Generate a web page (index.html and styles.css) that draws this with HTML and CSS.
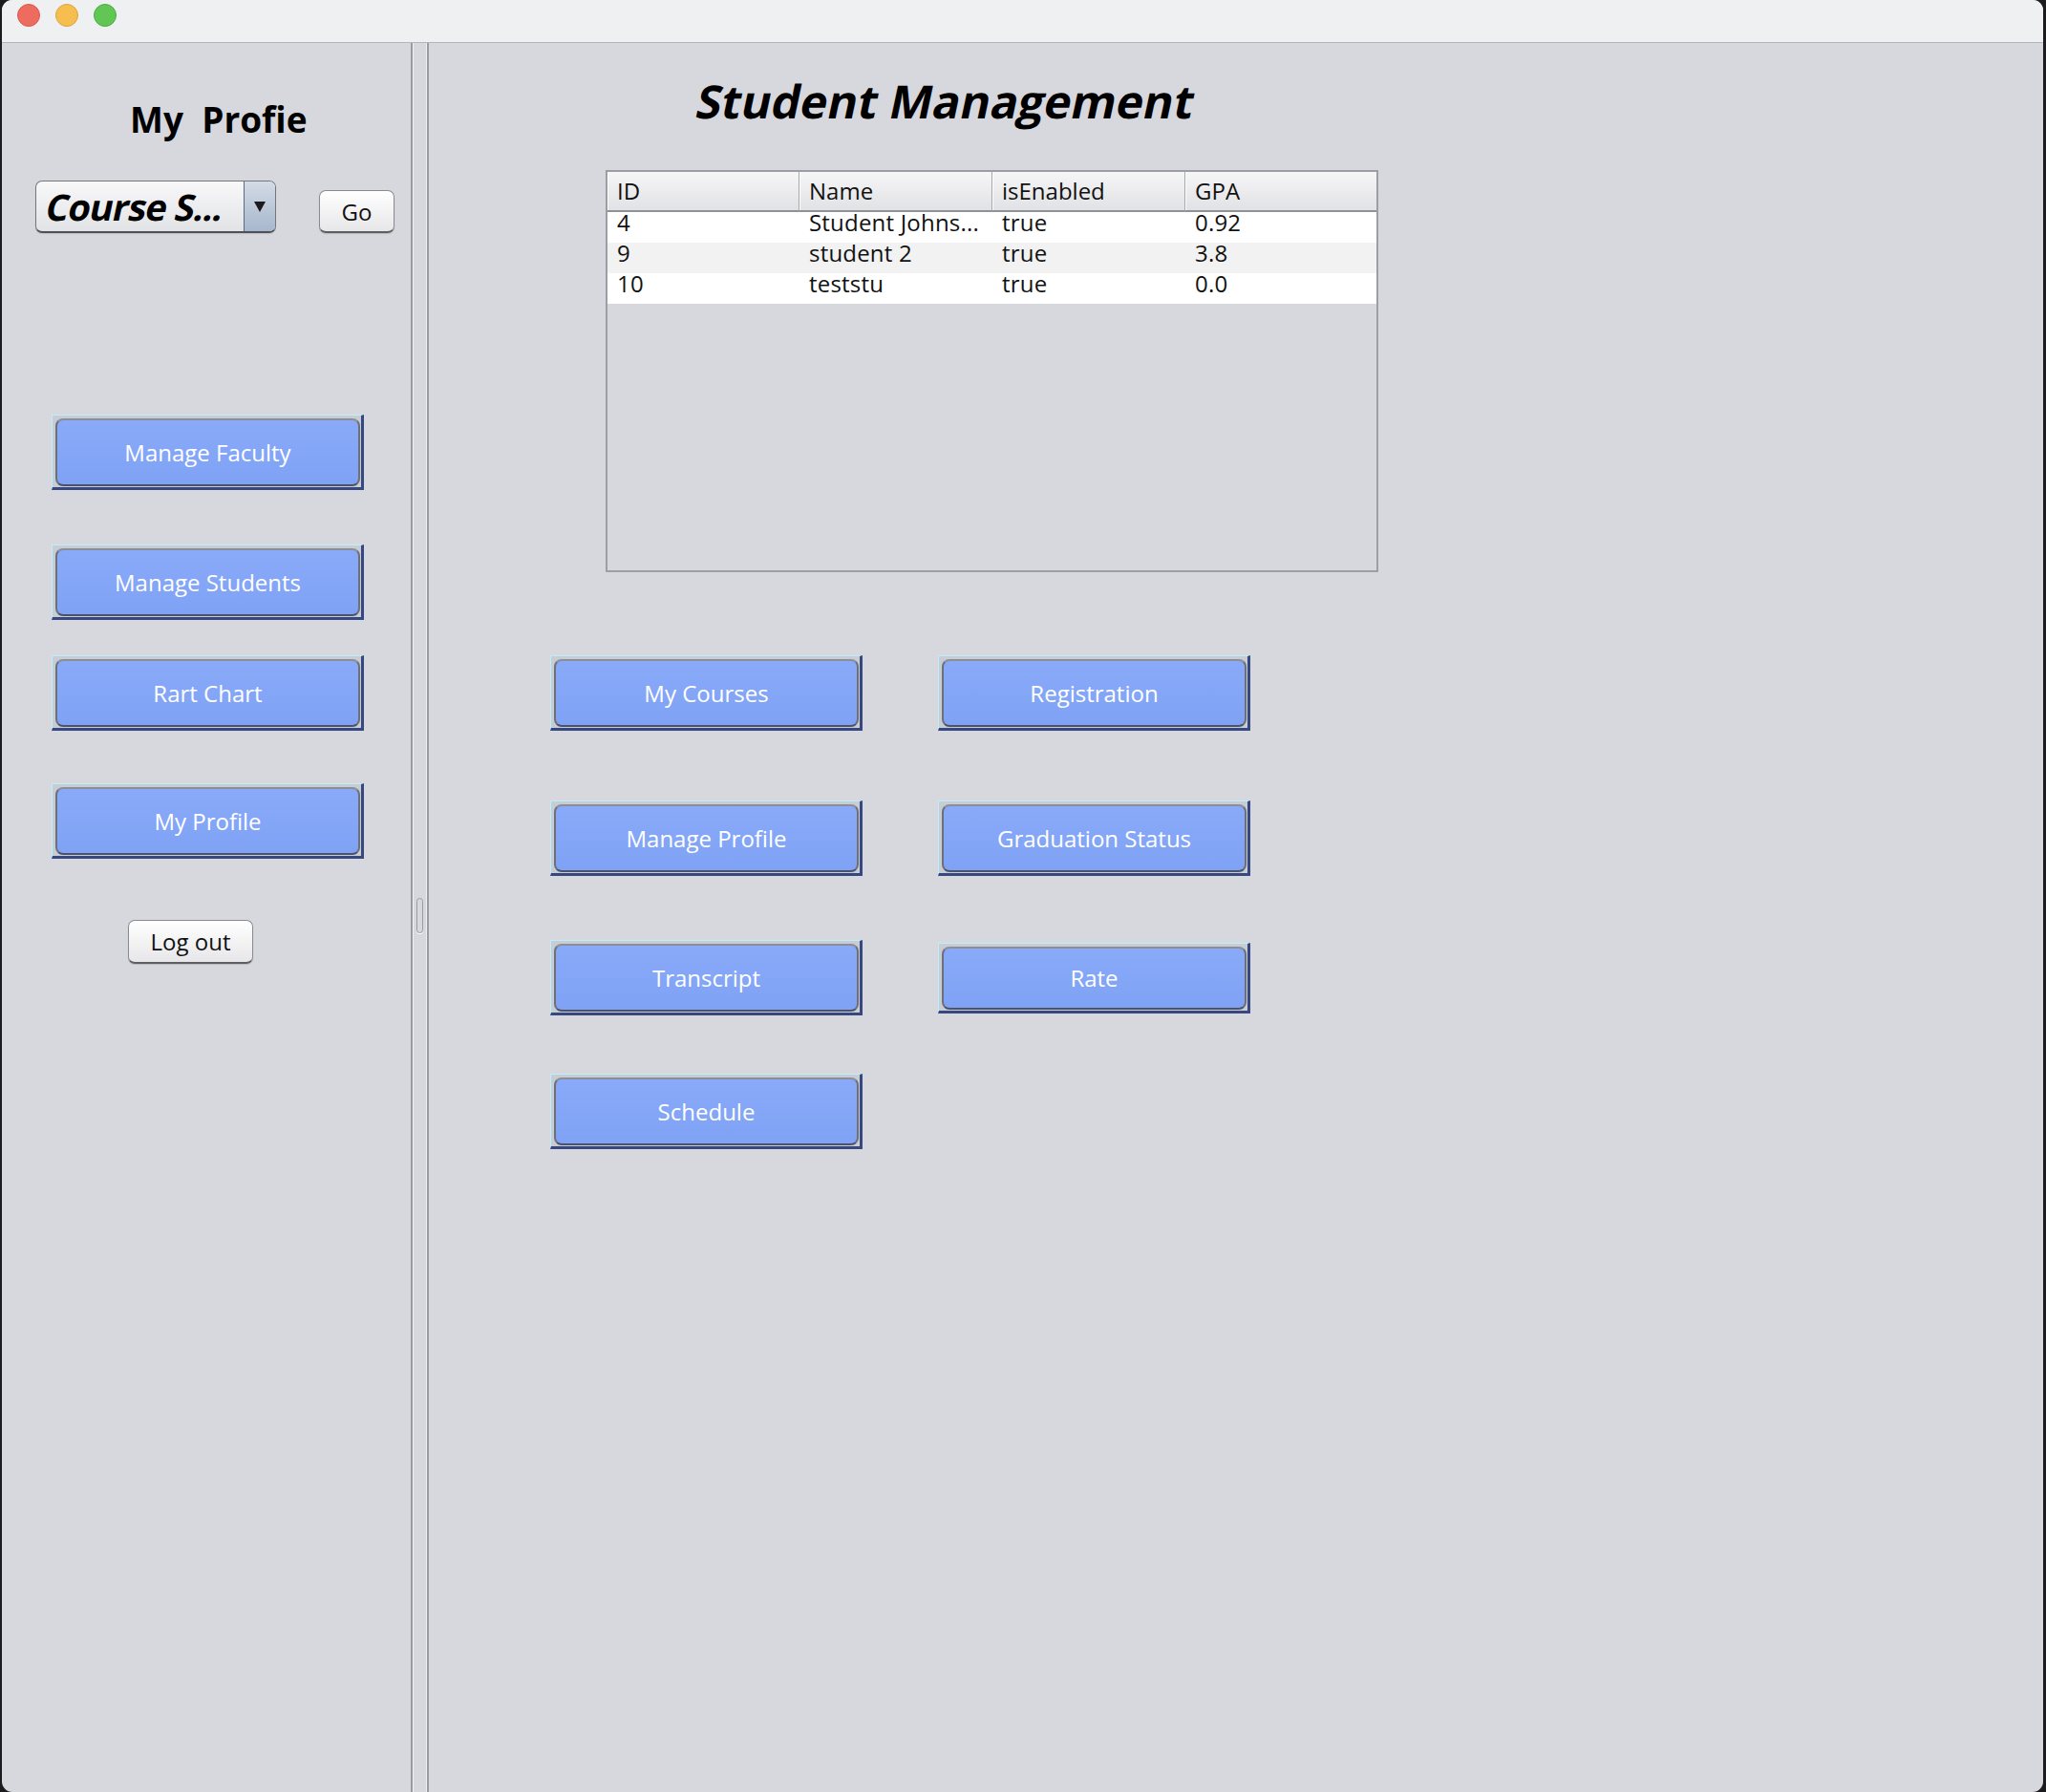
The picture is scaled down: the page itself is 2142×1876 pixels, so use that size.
FILE: index.html
```html
<!DOCTYPE html>
<html lang="en">
<head>
<meta charset="utf-8">
<title>Student Management</title>
<link rel="stylesheet" href="styles.css">
</head>
<body>
<div class="window">
  <header class="titlebar">
    <span class="light light-close"></span>
    <span class="light light-min"></span>
    <span class="light light-max"></span>
  </header>
  <div class="content">
    <aside class="side">
      <h2 class="side-title">My  Profie</h2>
      <div class="picker-row">
        <div class="combo">
          <span class="combo-text"><span class="oblique">Course S...</span></span>
          <span class="combo-arrow"><span class="tri"></span></span>
        </div>
        <button class="aqua go">Go</button>
      </div>
      <nav class="side-nav">
        <button class="tile"><span class="tile-face">Manage Faculty</span></button>
        <button class="tile nav-2"><span class="tile-face">Manage Students</span></button>
        <button class="tile nav-3"><span class="tile-face">Rart Chart</span></button>
        <button class="tile nav-4"><span class="tile-face">My Profile</span></button>
      </nav>
      <button class="aqua logout">Log out</button>
    </aside>
    <div class="divider"><span class="grip"></span></div>
    <main class="main">
      <h1 class="page-title"><span class="oblique">Student Management</span></h1>
      <div class="table-pane">
        <table class="grid">
          <colgroup>
            <col class="c1"><col class="c2"><col class="c3"><col class="c4">
          </colgroup>
          <thead>
            <tr><th>ID</th><th>Name</th><th>isEnabled</th><th class="last">GPA</th></tr>
          </thead>
          <tbody>
            <tr><td>4</td><td>Student Johns...</td><td>true</td><td>0.92</td></tr>
            <tr class="alt"><td>9</td><td>student 2</td><td>true</td><td>3.8</td></tr>
            <tr><td>10</td><td>teststu</td><td>true</td><td>0.0</td></tr>
          </tbody>
        </table>
      </div>
      <div class="actions">
        <div class="action-row">
          <button class="tile"><span class="tile-face">My Courses</span></button>
          <button class="tile"><span class="tile-face">Registration</span></button>
        </div>
        <div class="action-row row-2">
          <button class="tile"><span class="tile-face">Manage Profile</span></button>
          <button class="tile"><span class="tile-face">Graduation Status</span></button>
        </div>
        <div class="action-row row-3">
          <button class="tile"><span class="tile-face">Transcript</span></button>
          <button class="tile tile-short"><span class="tile-face">Rate</span></button>
        </div>
        <div class="action-row row-4">
          <button class="tile"><span class="tile-face">Schedule</span></button>
        </div>
      </div>
    </main>
  </div>
</div>
</body>
</html>
```
FILE: styles.css
```css
* { box-sizing: border-box; }

html, body {
  margin: 0;
  padding: 0;
}

body {
  width: 2142px;
  height: 1876px;
  overflow: hidden;
  background: #1c1c1e;
  font-family: "Open Sans", "DejaVu Sans", sans-serif;
  color: #111;
}

.window {
  margin-left: 2px;
  width: 2137px;
  height: 1876px;
  border-radius: 11px;
  overflow: hidden;
  background: #d7d8dd;
  display: flex;
  flex-direction: column;
}

/* title bar */
.titlebar {
  flex: none;
  height: 45px;
  background: #eff0f2;
  border-bottom: 1px solid #b4b5b9;
  display: flex;
  align-items: flex-start;
  gap: 16px;
  padding: 4px 0 0 16px;
}

.light {
  width: 24px;
  height: 24px;
  border-radius: 50%;
  border: 1px solid transparent;
}
.light-close { background: #ee6b60; border-color: #d75a4f; }
.light-min { background: #f6be4f; border-color: #dba33f; }
.light-max { background: #62c655; border-color: #50aa43; }

.content {
  flex: 1;
  min-height: 0;
  display: flex;
}

/* left panel */
.side {
  flex: none;
  width: 428px;
  display: flex;
  flex-direction: column;
  align-items: flex-start;
  padding-top: 55px;
}

.side-title {
  margin: 0 0 0 134px;
  font-size: 37px;
  line-height: 50px;
  font-weight: 700;
  white-space: pre;
  color: #000;
}

.picker-row {
  display: flex;
  align-items: flex-end;
  margin: 39px 0 0 35px;
}

.combo {
  width: 252px;
  height: 55px;
  display: flex;
  border: 1px solid #74767c;
  border-bottom: 2px solid #4f5158;
  border-radius: 7px;
  overflow: hidden;
  background: linear-gradient(#f8f8f9, #e2e3e6);
  box-shadow: 0 1px 1px rgba(0, 0, 0, 0.12);
}

.combo-text {
  flex: 1;
  display: flex;
  align-items: center;
  padding-left: 11px;
  font-size: 38px;
  letter-spacing: -0.9px;
  font-weight: 700;
  color: #000;
  white-space: nowrap;
  overflow: hidden;
}

.oblique {
  display: inline-block;
  transform: skewX(-12deg);
}

.combo-arrow {
  width: 33px;
  flex: none;
  border-left: 1px solid #5d6b82;
  background: linear-gradient(#d3dbe6, #a7b7cd);
  display: flex;
  align-items: center;
  justify-content: center;
}

.tri {
  width: 0;
  height: 0;
  border-left: 6px solid transparent;
  border-right: 6px solid transparent;
  border-top: 11px solid #1b1b1b;
}

.aqua {
  font-family: inherit;
  font-size: 24px;
  color: #111;
  padding: 0;
  background: linear-gradient(#ffffff, #e7e7e9);
  border: 1px solid #8b8b8f;
  border-bottom: 2px solid #5f5f63;
  border-radius: 7px;
  box-shadow: 0 1px 1px rgba(0, 0, 0, 0.15);
}

.go {
  width: 79px;
  height: 45px;
  margin-left: 45px;
}

.logout {
  width: 131px;
  height: 46px;
  margin: 64px 0 0 132px;
}

.side-nav {
  display: flex;
  flex-direction: column;
  margin: 190px 0 0 52px;
}
.nav-2 { margin-top: 57px; }
.nav-3 { margin-top: 37px; }
.nav-4 { margin-top: 55px; }

/* blue tile buttons */
.tile {
  width: 327px;
  height: 79px;
  display: flex;
  padding: 3px 1px 1px 3px;
  border-style: solid;
  border-width: 1px 3px 3px 1px;
  border-color: #bdeef9 #37477f #37477f #bdeef9;
  background: #c8ccd4;
  font-family: inherit;
  cursor: pointer;
}

.tile-short { height: 74px; }

.tile-face {
  flex: 1;
  display: flex;
  align-items: center;
  justify-content: center;
  border-radius: 8px;
  border: 2px solid #8d8e93;
  border-left-color: #6e7077;
  border-right-color: #6e7077;
  border-bottom-color: #4b5269;
  background: linear-gradient(#89aaf8, #80a2f5);
  color: #fff;
  font-size: 24px;
  white-space: nowrap;
}

/* divider */
.divider {
  flex: none;
  width: 19px;
  border-left: 2px solid #999ba2;
  border-right: 2px solid #999ba2;
  box-shadow: inset 1px 0 #eef0f2, inset -1px 0 #eef0f2;
  display: flex;
  align-items: center;
  justify-content: center;
}

.grip {
  width: 7px;
  height: 37px;
  border: 1px solid #9a9ca3;
  border-radius: 4px;
  box-shadow: 0 1px 0 #ffffff;
  margin-top: -4px;
}

/* main panel */
.main {
  flex: 1;
  display: flex;
  flex-direction: column;
  align-items: flex-start;
}

.page-title {
  margin: 33px 0 0 281px;
  font-size: 48px;
  line-height: 56px;
  font-weight: 700;
  color: #000;
  white-space: nowrap;
}

.table-pane {
  margin: 44px 0 0 185px;
  width: 809px;
  height: 421px;
  border: 2px solid #9c9ea4;
}

.grid {
  width: 805px;
  table-layout: fixed;
  border-collapse: separate;
  border-spacing: 0;
}

.c1 { width: 201px; }
.c2 { width: 202px; }
.c3 { width: 202px; }
.c4 { width: 200px; }

.grid th {
  height: 42px;
  padding: 0 0 0 10px;
  vertical-align: top;
  text-align: left;
  font-weight: 400;
  font-size: 24px;
  line-height: 40px;
  color: #111;
  background: linear-gradient(#f6f6f7, #e1e2e5);
  border-bottom: 2px solid #8f9197;
  border-right: 1px solid #a6a7ad;
  box-shadow: inset 1px 0 #ffffff;
}
.grid th.last { border-right: none; }

.grid td {
  height: 32px;
  padding: 0 0 0 10px;
  vertical-align: top;
  font-size: 24px;
  letter-spacing: 0.2px;
  line-height: 22px;
  color: #111;
  background: #ffffff;
  white-space: nowrap;
}
.grid tr.alt td { background: #f2f2f2; }

.actions {
  display: flex;
  flex-direction: column;
  margin: 87px 0 0 127px;
}

.action-row {
  display: flex;
  align-items: center;
  gap: 79px;
}
.row-2 { margin-top: 73px; }
.row-3 { margin-top: 67px; }
.row-4 { margin-top: 61px; }
```
